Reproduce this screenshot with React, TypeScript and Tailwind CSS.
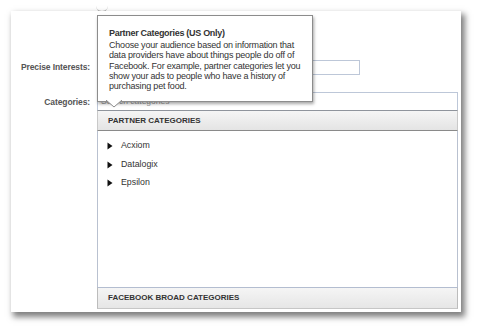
import React from "react";

const font = { fontFamily: '"Liberation Sans", Arial, sans-serif' };

function Caret() {
  return (
    <svg width="6" height="8" viewBox="0 0 6 8" className="shrink-0">
      <path d="M0.5 0.5 L5.5 4 L0.5 7.5 Z" fill="#111" />
    </svg>
  );
}

export default function App() {
  const partners = ["Acxiom", "Datalogix", "Epsilon"];

  return (
    <div className="relative w-[480px] h-[331px] bg-white overflow-hidden" style={font}>
      {/* help icon peeking above the panel */}
      <div className="absolute left-[96px] top-[-2px] w-[12px] h-[14px] rounded-full border-b border-[#bcbcbc]" />

      {/* main panel */}
      <div className="relative ml-[11px] mt-[11px] w-[450px] h-[301px] bg-white shadow-[3px_4px_6px_1px_rgba(0,0,0,0.5)]">
        <div className="flex items-center pt-[49px]">
          <div className="w-[79px] text-right whitespace-nowrap text-[8.5px] tracking-[-0.1px] font-bold text-[#555]">Precise Interests:</div>
          <div className="ml-[7px] w-[263px] h-[15px] border border-[#bdc7d8] bg-white" />
        </div>

        <div className="flex mt-[17px]">
          <div className="w-[79px] pt-[4px] text-right whitespace-nowrap text-[8.5px] tracking-[-0.1px] font-bold text-[#555]">Categories:</div>
          <div className="ml-[7px] w-[361px] flex flex-col">
            <div className="h-[18px] border border-b-0 border-[#bdc7d8] flex items-center pl-[3px] text-[8.5px] text-[#999]">
              Search categories
            </div>
            <div className="h-[21px] flex items-center pl-[10px] border-t border-b border-t-[#8f949c] border-b-[#8a8a8a] border-x border-x-[#c9c9c9] bg-gradient-to-b from-[#f5f5f5] to-[#e4e4e4] text-[8px] font-bold text-[#333]">
              PARTNER CATEGORIES
            </div>
            <div className="h-[156px] border-x border-[#b9c1d0] flex flex-col pt-[10px] pl-[9px] gap-[8.5px]">
              {partners.map((p) => (
                <div key={p} className="flex items-center h-[10px] text-[8.8px] text-[#333]">
                  <Caret />
                  <span className="ml-[8px]">{p}</span>
                </div>
              ))}
            </div>
            <div className="h-[22px] flex items-center pl-[10px] border-t border-t-[#b3bdd0] border-b border-b-[#c6c6c6] border-x border-x-[#bcbcbc] bg-gradient-to-b from-[#f5f5f5] to-[#e6e6e6] text-[8px] font-bold text-[#333]">
              FACEBOOK BROAD CATEGORIES
            </div>
          </div>
        </div>
      </div>

      {/* tooltip */}
      <div className="absolute left-[97px] top-[15px] w-[216px] h-[87px] bg-white border border-[#8c8c8c] shadow-[1px_2px_3px_rgba(0,0,0,0.35)] px-[11px] pt-[11px] text-[#333]">
        <div className="text-[9px] tracking-[-0.3px] font-bold leading-[12px] whitespace-nowrap">Partner Categories (US Only)</div>
        <div className="mt-[1px] text-[9px] tracking-[-0.2px] leading-[10.3px] whitespace-nowrap">
          Choose your audience based on information that
          <br />
          data providers have about things people do off of
          <br />
          Facebook. For example, partner categories let you
          <br />
          show your ads to people who have a history of
          <br />
          purchasing pet food.
        </div>
        <svg className="absolute left-[8px] bottom-[-7px]" width="16" height="8" viewBox="0 0 16 8">
          <path d="M0 0 L8 7 L16 0" fill="white" stroke="#8c8c8c" strokeWidth="1" />
          <rect x="1" y="-1" width="14" height="1" fill="white" />
        </svg>
      </div>
    </div>
  );
}
